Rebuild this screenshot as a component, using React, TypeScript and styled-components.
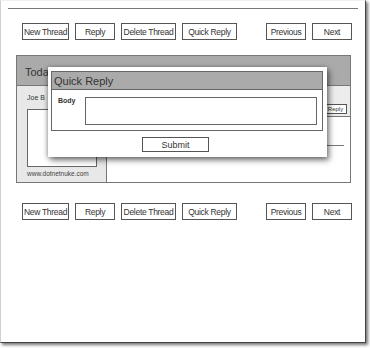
import styled, { createGlobalStyle } from "styled-components";

const GlobalStyle = createGlobalStyle`
  html, body {
    margin: 0;
    padding: 0;
    background: #ffffff;
  }
  body {
    width: 370px;
    height: 348px;
    overflow: hidden;
    font-family: "Liberation Sans", Arial, sans-serif;
    color: #333;
  }
`;

const Frame = styled.div`
  position: relative;
  box-sizing: border-box;
  width: 366px;
  height: 343px;
  background: #fff;
  border-left: 1px solid #cfcfcf;
  border-top: 1px solid #f0f0f0;
  border-right: 1px solid #444;
  border-bottom: 1px solid #444;
  box-shadow: 2px 2px 3px rgba(0, 0, 0, 0.55);
  display: flex;
  flex-direction: column;
`;

const Rule = styled.div`
  margin: 7px 0 0 7px;
  width: 350px;
  height: 1px;
  background: #777;
`;

const Toolbar = styled.div<{ $top: number }>`
  display: flex;
  gap: 6px;
  margin-top: ${(p) => p.$top}px;
  padding-left: 21px;
  width: 330px;
`;

const Button = styled.div<{ $w: number; $push?: boolean }>`
  box-sizing: border-box;
  width: ${(p) => p.$w}px;
  height: 17px;
  border: 1px solid #555;
  display: flex;
  align-items: center;
  justify-content: center;
  font-size: 8.5px;
  letter-spacing: -0.3px;
  color: #333;
  white-space: nowrap;
  ${(p) => (p.$push ? "margin-left: auto;" : "")}
`;

const Panel = styled.div`
  position: relative;
  box-sizing: border-box;
  margin: 15px 0 0 15px;
  width: 335px;
  height: 128px;
  border: 1px solid #777;
  display: flex;
  flex-direction: column;
`;

const PanelHeader = styled.div`
  height: 30px;
  background: #aaaaaa;
  border-bottom: 1px solid #777;
  display: flex;
  align-items: center;
  padding: 2px 0 0 8px;
  box-sizing: border-box;
  font-size: 11px;
  color: #333;
`;

const PanelBody = styled.div`
  flex: 1;
  display: grid;
  grid-template-columns: 90px 1fr;
`;

const Author = styled.div`
  background: #e8e8e8;
  border-right: 1px solid #777;
  display: flex;
  flex-direction: column;
  padding: 7px 0 0 10px;
`;

const AuthorName = styled.div`
  font-size: 7px;
  line-height: 9px;
  color: #333;
`;

const Avatar = styled.div`
  margin-top: 7px;
  width: 68px;
  height: 56px;
  background: #fff;
  border: 1px solid #666;
`;

const Website = styled.div`
  margin-top: 2px;
  font-size: 6.5px;
  line-height: 9px;
  color: #444;
`;

const Post = styled.div`
  display: flex;
  flex-direction: column;
`;

const PostBar = styled.div`
  height: 31px;
  background: #ececec;
  border-bottom: 1px solid #777;
  display: flex;
  align-items: flex-end;
  justify-content: flex-end;
  padding: 0 3px 2px 0;
  box-sizing: border-box;
`;

const MiniButton = styled.div`
  box-sizing: border-box;
  width: 23px;
  height: 10px;
  border: 1px solid #555;
  background: #fff;
  font-size: 6px;
  display: flex;
  align-items: center;
  justify-content: center;
`;

const PostLine = styled.div`
  margin: 28px 6px 0 6px;
  height: 1px;
  background: #777;
`;

const Modal = styled.div`
  position: absolute;
  left: 31px;
  top: 11px;
  box-sizing: border-box;
  width: 279px;
  height: 90px;
  background: #fff;
  padding: 4px 4px 0 3px;
  box-shadow: 2px 3px 6px rgba(0, 0, 0, 0.55), -1px 0 4px rgba(0, 0, 0, 0.25);
  display: flex;
  flex-direction: column;
`;

const ModalBox = styled.div`
  box-sizing: border-box;
  height: 60px;
  border: 1px solid #666;
  display: flex;
  flex-direction: column;
`;

const ModalHeader = styled.div`
  height: 18px;
  background: #aaaaaa;
  border-bottom: 1px solid #666;
  display: flex;
  align-items: flex-end;
  padding: 0 0 2px 2px;
  box-sizing: border-box;
  font-size: 11px;
  color: #333;
`;

const FieldRow = styled.div`
  display: flex;
  padding: 7px 5px 0 6px;
`;

const FieldLabel = styled.div`
  width: 27px;
  font-size: 7px;
  font-weight: bold;
  color: #333;
`;

const TextArea = styled.div`
  box-sizing: border-box;
  width: 233px;
  height: 28px;
  border: 1px solid #666;
`;

const ModalFooter = styled.div`
  padding: 6px 0 0 91px;
`;

const SubmitButton = styled.div`
  box-sizing: border-box;
  width: 67px;
  height: 15px;
  border: 1px solid #555;
  display: flex;
  align-items: center;
  justify-content: center;
  font-size: 9px;
`;

function ThreadToolbar({ top }: { top: number }) {
  return (
    <Toolbar $top={top}>
      <Button $w={47}>New Thread</Button>
      <Button $w={40}>Reply</Button>
      <Button $w={55}>Delete Thread</Button>
      <Button $w={55}>Quick Reply</Button>
      <Button $w={40} $push>Previous</Button>
      <Button $w={40}>Next</Button>
    </Toolbar>
  );
}

export default function App() {
  return (
    <>
      <GlobalStyle />
      <Frame>
        <Rule />
        <ThreadToolbar top={14} />
        <Panel>
          <PanelHeader>Today</PanelHeader>
          <PanelBody>
            <Author>
              <AuthorName>Joe B</AuthorName>
              <Avatar />
              <Website>www.dotnetnuke.com</Website>
            </Author>
            <Post>
              <PostBar>
                <MiniButton>Reply</MiniButton>
              </PostBar>
              <PostLine />
            </Post>
          </PanelBody>
          <Modal>
            <ModalBox>
              <ModalHeader>Quick Reply</ModalHeader>
              <FieldRow>
                <FieldLabel>Body</FieldLabel>
                <TextArea />
              </FieldRow>
            </ModalBox>
            <ModalFooter>
              <SubmitButton>Submit</SubmitButton>
            </ModalFooter>
          </Modal>
        </Panel>
        <ThreadToolbar top={20} />
      </Frame>
    </>
  );
}
